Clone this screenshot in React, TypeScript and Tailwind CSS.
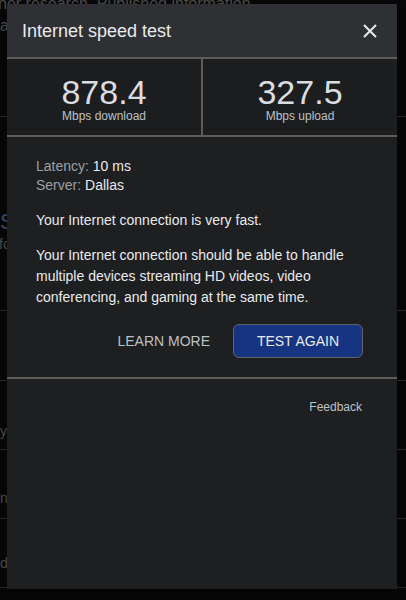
import React from 'react';

const font = { fontFamily: '"Liberation Sans", Arial, sans-serif' };

function Stat({ value, label }: { value: string; label: string }) {
  return (
    <div className="flex-1 flex flex-col items-center pt-[16px]">
      <div className="text-[34px] leading-[34px] text-[#dadce0]">{value}</div>
      <div className="text-[12px] leading-[14px] text-[#bdc1c6]">{label}</div>
    </div>
  );
}

function PageBehind() {
  // what the dialog sits on; only a sliver shows at the left edge
  return (
    <div className="flex flex-col text-[#4a4a4a] text-[16px]">
      <div className="h-[117px] border-b border-[#262626] leading-[22px]">
        <div className="-ml-[2px] -mt-[7px] whitespace-nowrap">ner research. Published information</div>
        <div>a</div>
      </div>
      <div className="h-[194px] border-b border-[#262626] pt-[94px] leading-[22px]">
        <div className="text-[22px] text-[#3a4a66]">S</div>
        <div className="text-[14px] -ml-[1px]">fo</div>
      </div>
      <div className="h-[70px] border-b border-[#262626]" />
      <div className="h-[69px] border-b border-[#262626] pt-[40px] text-[14px]">yp</div>
      <div className="h-[69px] border-b border-[#262626] pt-[38px] text-[14px]">nc</div>
      <div className="h-[69px] border-b border-[#262626] pt-[34px] text-[14px]">d</div>
    </div>
  );
}

export default function App() {
  return (
    <div className="relative w-[406px] h-[600px] overflow-hidden bg-[#070707]" style={font}>
      <PageBehind />

      {/* Dialog */}
      <div className="absolute left-[7px] top-[4px] w-[390px] h-[585px] bg-[#1e1f21] flex flex-col shadow-lg">
        <div className="h-[53px] bg-[#2e3033] flex items-center justify-between pl-[15px] pr-[20px]">
          <h2 className="text-[18px] text-[#e8eaed] pt-[2px]">Internet speed test</h2>
          <button className="w-[14px] h-[14px] text-[#e8eaed]">
            <svg viewBox="0 0 14 14" width="14" height="14">
              <path d="M1 1 L13 13 M13 1 L1 13" stroke="currentColor" strokeWidth="2" />
            </svg>
          </button>
        </div>
        <div className="h-[2px] bg-[#5e5c56]" />

        <div className="h-[76px] bg-[#1c1d1f] flex">
          <Stat value="878.4" label="Mbps download" />
          <div className="w-[2px] bg-[#5e5c56]" />
          <Stat value="327.5" label="Mbps upload" />
        </div>
        <div className="h-[2px] bg-[#5e5c56]" />

        <div className="pl-[29px] pr-[34px] pt-[20px] text-[14px] text-[#e8eaed]">
          <div className="leading-[19px]">
            <span className="text-[#9aa0a6]">Latency: </span>10 ms
          </div>
          <div className="leading-[19px]">
            <span className="text-[#9aa0a6]">Server: </span>Dallas
          </div>
          <p className="leading-[19px] mt-[16px]">Your Internet connection is very fast.</p>
          <p className="leading-[21px] mt-[15px]">
            Your Internet connection should be able to handle multiple devices streaming HD videos, video
            conferencing, and gaming at the same time.
          </p>
          <div className="flex justify-end items-center gap-[23px] mt-[16px] mb-[19px]">
            <button className="text-[14px] text-[#bdc1c6] uppercase">Learn more</button>
            <button className="w-[130px] h-[34px] rounded-[6px] bg-[#173480] border border-[#5f6368] text-[14px] text-[#e8eaed] uppercase">
              Test again
            </button>
          </div>
        </div>
        <div className="h-[2px] bg-[#5e5c56]" />

        <div className="flex justify-end pr-[35px] pt-[19px]">
          <button className="text-[12px] text-[#bdc1c6]">Feedback</button>
        </div>
      </div>
    </div>
  );
}
